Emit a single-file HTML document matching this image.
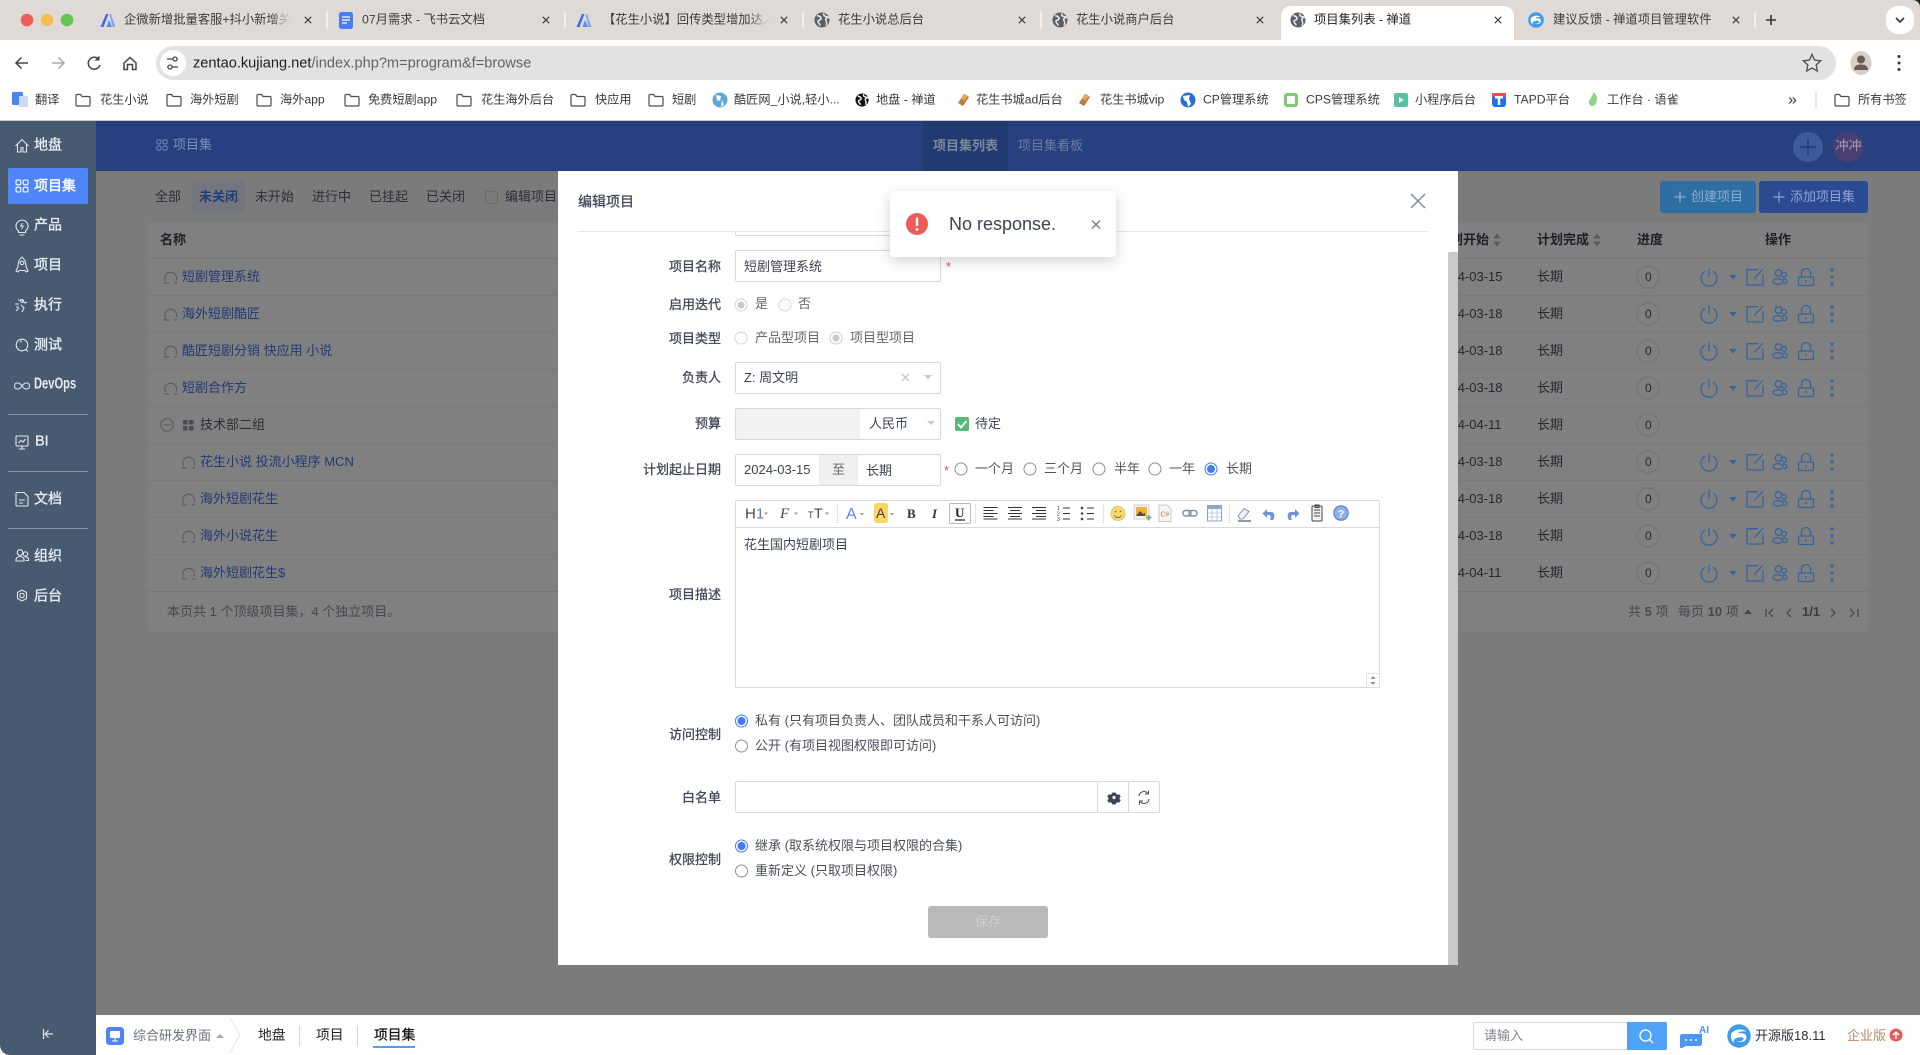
<!DOCTYPE html>
<html lang="zh"><head><meta charset="utf-8"><title>项目集列表 - 禅道</title>
<style>
*{box-sizing:border-box}
html,body{margin:0;padding:0;width:1920px;height:1055px;overflow:hidden;background:#fff}
body{position:relative;font-family:"Liberation Sans","Noto Sans CJK SC",sans-serif;font-size:13px;color:#333}
.b{position:absolute}
.t{position:absolute;white-space:nowrap;line-height:1.2;transform:translateY(-50%)}
.r{text-align:right}
.row{position:absolute;left:0;top:0;width:1920px;height:0}
.row .t{top:0}
.row svg{position:absolute;overflow:visible}
.tab{font-size:12.3px;color:#3b3b3b}
.bm{font-size:12.2px;top:100px;color:#3a3a3a}
.side{font-size:14px;color:#e6ebf0;left:34px;-webkit-text-stroke:.35px #e6ebf0}
.f{font-size:13px;top:197px;color:#2b2f38}
.a{font-size:13px;color:#1f3a74}
.d{font-size:13px;color:#25282f}
.th{font-size:13px;font-weight:700;color:#1d2026;top:240px}
.lb{font-size:13px;color:#3c4353;right:1199px;text-align:right;-webkit-text-stroke:.25px #3c4353}
.ft{font-size:13px;color:#3c4353}
.box{position:absolute;background:#fff;border:1px solid #d6d9df;border-radius:2px}
.svgfull{position:absolute;left:0;top:0;overflow:visible;pointer-events:none}
</style></head><body>

<svg width="0" height="0" style="position:absolute">
<defs>
<symbol id="x8" viewBox="0 0 10 10" overflow="visible"><path d="M1 1L9 9M9 1L1 9" stroke="#3c3c3c" stroke-width="1.4" fill="none"/></symbol>
<symbol id="folder" viewBox="0 0 16 14" overflow="visible"><path d="M1 2.5a1 1 0 0 1 1-1h3.5l1.500 2h7a1 1 0 0 1 1 1v7.500a1 1 0 0 1-1 1H2a1 1 0 0 1-1-1z" fill="none" stroke="#4b4b4b" stroke-width="1.2"/></symbol>
<symbol id="globe" viewBox="0 0 16 16" overflow="visible"><circle cx="8" cy="8" r="7.500" fill="#5b6066"/><path d="M3 3.500c2 .5 4 1 4 3s-3 1-3 3 2 1.500 2 4M10 1.500c-1 2 1 3 2 3l3 1c-2 0-4 1-3 3s1 3 0 5" fill="none" stroke="#e7e7e7" stroke-width="1.600"/></symbol>
<symbol id="globeb" viewBox="0 0 16 16" overflow="visible"><circle cx="8" cy="8" r="7.500" fill="#111"/><path d="M3 3.500c2 .5 4 1 4 3s-3 1-3 3 2 1.500 2 4M10 1.500c-1 2 1 3 2 3l3 1c-2 0-4 1-3 3s1 3 0 5" fill="none" stroke="#f5f5f5" stroke-width="1.600"/></symbol>
<symbol id="blueA" viewBox="0 0 16 16" overflow="visible"><path d="M0.500 15L6 2h2.500L3.500 15z" fill="#3d6fe0"/><path d="M6.500 15L9 8l3 7z" fill="#5c8cf0"/><path d="M9.500 2H11l4.500 13h-3z" fill="#7fa6f5"/></symbol>
<symbol id="zt" viewBox="0 0 16 16" overflow="visible"><circle cx="8" cy="8" r="7.800" fill="#3d9be9"/><path d="M3 6c3-3 7-3 10-1-3-.5-5 0-6 1.500 3-1 6 0 6 2.500s-4 4-6.500 2.500c2 .5 4 0 4.500-1.500S8 8.500 6 9.500 4 12 5.500 13C3 12 2 9 3 6z" fill="#fff"/></symbol>
<symbol id="prog" viewBox="0 0 16 16" overflow="visible"><path d="M3 12.200A6.300 6.300 0 1 1 13.800 11.500" fill="none" stroke="#565a66" stroke-width="1.100"/><path d="M.5 13.800H6.500M11.500 13.800H15" stroke="#565a66" stroke-width="1.100"/></symbol>
<symbol id="acts" viewBox="0 0 140 24" overflow="visible">
<g fill="none" stroke="#33659e" stroke-width="1.300">
<path d="M5 6.200A8 8 0 1 0 13 6.200"/><path d="M9 3.500V12"/>
<path d="M58 4.700H48a1 1 0 0 0-1 1V19a1 1 0 0 0 1 1H62a1 1 0 0 0 1-1V9.500"/><path d="M54.500 13.500L63 4"/>
<circle cx="78.500" cy="8" r="3.300"/><circle cx="84" cy="9.800" r="2.400"/><ellipse cx="78" cy="16.500" rx="5" ry="2.800"/><path d="M83 13.800c2.300 0 4 1 4 2.600s-1.500 2.300-3.500 2.300"/>
<rect x="98.500" y="12" width="15" height="8.500" rx="1.200"/><path d="M101.500 12V8a4.500 4.500 0 0 1 9 0v4"/><path d="M106 15v2.500"/>
</g>
<path d="M29 10h8l-4 4.500z" fill="#33659e"/>
<circle cx="132" cy="5" r="1.700" fill="#33659e"/><circle cx="132" cy="12" r="1.700" fill="#33659e"/><circle cx="132" cy="19" r="1.700" fill="#33659e"/>
</symbol>
<symbol id="pc" viewBox="0 0 24 24" overflow="visible"><circle cx="12" cy="12" r="11" fill="none" stroke="#767676" stroke-width="1.500"/><circle cx="12" cy="1" r=".7" fill="#4c8a5c"/></symbol>
<symbol id="radio" viewBox="0 0 14 14" overflow="visible"><circle cx="7" cy="7" r="6" fill="#fff" stroke="#8b8f99" stroke-width="1"/></symbol>
<symbol id="radiol" viewBox="0 0 14 14" overflow="visible"><circle cx="7" cy="7" r="6" fill="#fff" stroke="#d8d8d8" stroke-width="1"/></symbol>
<symbol id="radiod" viewBox="0 0 14 14" overflow="visible"><circle cx="7" cy="7" r="6" fill="#fff" stroke="#d0d0d0" stroke-width="1"/><circle cx="7" cy="7" r="3.500" fill="#c9c9c9"/></symbol>
<symbol id="radioc" viewBox="0 0 14 14" overflow="visible"><circle cx="7" cy="7" r="6" fill="#fff" stroke="#3f7cf6" stroke-width="1"/><circle cx="7" cy="7" r="4" fill="#3f7cf6"/></symbol>
<symbol id="grid" viewBox="0 0 14 14" overflow="visible"><g fill="none" stroke="currentColor" stroke-width="1.100"><rect x="1" y="1" width="4.800" height="4.800" rx="1.500"/><rect x="8.200" y="1" width="4.800" height="4.800" rx="1.500"/><rect x="1" y="8.200" width="4.800" height="4.800" rx="1.500"/><rect x="8.200" y="8.200" width="4.800" height="4.800" rx="1.500"/></g></symbol>
</defs>
</svg>

<!-- tab strip -->
<div class="b" style="left:0;top:0;width:1920px;height:40px;background:#e0dad7"></div>
<div class="b" style="left:1281px;top:6px;width:233px;height:34px;background:#fff;border-radius:10px 10px 0 0"></div>
<div class="b" style="left:1886px;top:6px;width:28px;height:28px;background:#fff;border-radius:12px"></div>
<div class="b" style="left:0;top:40px;width:1920px;height:80px;background:#fff"></div>
<div class="b" style="left:0;top:120px;width:1920px;height:1px;background:#c9c9c9"></div>

<span class="t tab" style="left:124px;top:20px;width:166px;overflow:hidden;-webkit-mask-image:linear-gradient(90deg,#000 88%,transparent)">企微新增批量客服+抖小新增关注</span>
<span class="t tab" style="left:362px;top:20px">07月需求 - 飞书云文档</span>
<span class="t tab" style="left:603px;top:20px;width:166px;overflow:hidden;-webkit-mask-image:linear-gradient(90deg,#000 88%,transparent)">【花生小说】回传类型增加达人</span>
<span class="t tab" style="left:838px;top:20px">花生小说总后台</span>
<span class="t tab" style="left:1076px;top:20px">花生小说商户后台</span>
<span class="t tab" style="left:1314px;top:20px;color:#222">项目集列表 - 禅道</span>
<span class="t tab" style="left:1553px;top:20px">建议反馈 - 禅道项目管理软件</span>

<!-- address bar -->
<div class="b" style="left:156px;top:46px;width:1680px;height:34px;background:#e2e2e2;border-radius:17px"></div>
<div class="b" style="left:160px;top:50px;width:26px;height:26px;background:#fff;border-radius:50%"></div>
<span class="t" style="left:193px;top:64px;font-size:14.6px;color:#1f1f1f">zentao.kujiang.net<span style="color:#5f6368">/index.php?m=program&amp;f=browse</span></span>

<!-- bookmarks -->
<span class="t bm" style="left:35px">翻译</span>
<span class="t bm" style="left:100px">花生小说</span>
<span class="t bm" style="left:190px">海外短剧</span>
<span class="t bm" style="left:280px">海外app</span>
<span class="t bm" style="left:368px">免费短剧app</span>
<span class="t bm" style="left:481px">花生海外后台</span>
<span class="t bm" style="left:595px">快应用</span>
<span class="t bm" style="left:672px">短剧</span>
<span class="t bm" style="left:734px">酷匠网_小说,轻小...</span>
<span class="t bm" style="left:876px">地盘 - 禅道</span>
<span class="t bm" style="left:976px">花生书城ad后台</span>
<span class="t bm" style="left:1100px">花生书城vip</span>
<span class="t bm" style="left:1203px">CP管理系统</span>
<span class="t bm" style="left:1306px">CPS管理系统</span>
<span class="t bm" style="left:1415px">小程序后台</span>
<span class="t bm" style="left:1514px">TAPD平台</span>
<span class="t bm" style="left:1607px">工作台 · 语雀</span>
<span class="t bm" style="left:1788px;font-size:16px">»</span>
<span class="t bm" style="left:1858px">所有书签</span>

<!-- chrome icons -->
<svg class="svgfull" width="1920" height="1055">
<circle cx="27" cy="20" r="6.300" fill="#ec5f57"/><circle cx="47" cy="20" r="6.300" fill="#f4bd4f"/><circle cx="67" cy="20" r="6.300" fill="#62c554"/>
<use href="#blueA" x="100" y="12" width="16" height="16"/>
<rect x="339" y="12" width="14" height="17" rx="2.500" fill="#4a7df2"/><path d="M342 17h8M342 20h8M342 23h5" stroke="#fff" stroke-width="1.200"/>
<use href="#blueA" x="576" y="12" width="16" height="16"/>
<use href="#globe" x="814" y="12" width="16" height="16"/>
<use href="#globe" x="1052" y="12" width="16" height="16"/>
<use href="#globe" x="1290" y="12" width="16" height="16"/>
<use href="#zt" x="1528" y="12" width="16" height="16"/>
<use href="#x8" x="304" y="16" width="8" height="8"/><use href="#x8" x="542" y="16" width="8" height="8"/><use href="#x8" x="780" y="16" width="8" height="8"/><use href="#x8" x="1018" y="16" width="8" height="8"/><use href="#x8" x="1256" y="16" width="8" height="8"/><use href="#x8" x="1494" y="16" width="8" height="8"/><use href="#x8" x="1732" y="16" width="8" height="8"/>
<g stroke="#fff" stroke-width="1.200"><path d="M327 12v16M565 12v16M803 12v16M1041 12v16M1755 12v16"/></g>
<path d="M1771 15v10M1766 20h10" stroke="#333" stroke-width="1.600"/>
<path d="M1896 18l4 4 4-4" fill="none" stroke="#333" stroke-width="1.600"/>
<path d="M1912 0h8v7c0-4-3-7-8-7zM1920 1047v8h-8c5 0 8-3 8-8z" fill="#222"/>
<!-- toolbar -->
<g fill="none" stroke="#444" stroke-width="1.500">
<path d="M28 63H16M21.500 57.500L16 63l5.500 5.500"/>
<path d="M52 63h12M58.500 57.500L64 63l-5.500 5.500" stroke="#a8a8a8"/>
<path d="M99 59.500A6 6 0 1 0 100 65"/>
<path d="M124 63l6-5.500 6 5.500v6.500h-3.500V64.500h-5v5H124z"/>
</g>
<path d="M99.500 55.500v5h-5z" fill="#444"/>
<g stroke="#444" stroke-width="1.200" fill="none"><path d="M167 59h6M177 59h1M167 67h1M172 67h6"/><circle cx="175" cy="59" r="2"/><circle cx="170" cy="67" r="2"/></g>
<path d="M1812 54.500l2.600 5.600 6.100.7-4.500 4.200 1.200 6-5.400-3-5.400 3 1.200-6-4.500-4.200 6.100-.7z" fill="none" stroke="#555" stroke-width="1.400"/>
<ellipse cx="1861" cy="63" rx="10.500" ry="12" fill="#d7cfca"/><circle cx="1861" cy="59.500" r="4" fill="#6b5a50"/><path d="M1854 70c0-4 3-5.500 7-5.500s7 1.500 7 5.500z" fill="#6b5a50"/>
<circle cx="1899" cy="56.500" r="1.500" fill="#333"/><circle cx="1899" cy="63" r="1.500" fill="#333"/><circle cx="1899" cy="69.500" r="1.500" fill="#333"/>
<!-- bookmark icons -->
<rect x="12" y="92" width="11" height="13" rx="1.500" fill="#4a85f2"/><rect x="19" y="96" width="9" height="11" rx="1" fill="#c9d9f7"/>
<use href="#folder" x="75" y="93" width="16" height="14"/><use href="#folder" x="166" y="93" width="16" height="14"/><use href="#folder" x="256" y="93" width="16" height="14"/><use href="#folder" x="344" y="93" width="16" height="14"/><use href="#folder" x="456" y="93" width="16" height="14"/><use href="#folder" x="570" y="93" width="16" height="14"/><use href="#folder" x="648" y="93" width="16" height="14"/><use href="#folder" x="1834" y="93" width="16" height="14"/>
<circle cx="720" cy="100" r="7.500" fill="#5aa9d8"/><path d="M716 95l5 1-1 5-3-1zM722 100l2 5-3 2z" fill="#fff"/>
<use href="#globeb" x="855" y="93" width="14" height="14"/>
<g fill="#b97a3e"><path d="M958 103l6-9 5 3-6 9z"/><path d="M1079 103l6-9 5 3-6 9z"/></g>
<g fill="#e2a45f"><path d="M961 98l4-4 3 2-4 5z"/><path d="M1082 98l4-4 3 2-4 5z"/></g>
<circle cx="1188" cy="100" r="7.500" fill="#2a6fd6"/><path d="M1183 96l7-1-1 4 2 5-3 3-1-5-3-2z" fill="#fff"/>
<rect x="1284" y="93" width="14" height="14" rx="3" fill="#7ccb73"/><rect x="1287" y="96" width="8" height="8" fill="#fff"/>
<rect x="1394" y="93" width="14" height="14" rx="2" fill="#57c2a0"/><path d="M1399 97l4.500 3-4.500 3z" fill="#fff"/>
<rect x="1492" y="93" width="14" height="14" rx="3" fill="#1f6ff2"/><path d="M1492 93h14v4h-14z" fill="#ea4f4f"/><path d="M1495 96h8v2.500h-2.800V105h-2.400V98.500H1495z" fill="#fff"/>
<path d="M1593 92c4 2 5 7 3 11s-6 4-7 0c0-5 4-6 4-11z" fill="#8fd18a"/>
<path d="M1816 92v16" stroke="#cfcfcf"/>
</svg>

<!-- app -->
<div class="b" style="left:0;top:121px;width:96px;height:934px;background:#475a70;border-bottom-left-radius:10px"></div>
<div class="b" style="left:96px;top:121px;width:1824px;height:50px;background:#264080"></div>
<div class="b" style="left:96px;top:171px;width:1824px;height:844px;background:#7b7b7b"></div>
<div class="b" style="left:96px;top:1015px;width:1824px;height:40px;background:#fff"></div>

<div class="b" style="left:8px;top:168px;width:80px;height:36px;background:#4e85f8;border-radius:2px"></div>
<span class="t side" style="top:145px">地盘</span>
<span class="t side" style="top:186px;color:#fff;-webkit-text-stroke:.4px #fff">项目集</span>
<span class="t side" style="top:225px">产品</span>
<span class="t side" style="top:265px">项目</span>
<span class="t side" style="top:305px">执行</span>
<span class="t side" style="top:345px">测试</span>
<span class="t side" style="top:385px;font-weight:700;font-size:15.500px;transform:translateY(-50%) scaleX(.72);transform-origin:left center;-webkit-text-stroke:0">DevOps</span>
<span class="t side" style="top:442px;left:35px;font-size:14.500px">BI</span>
<span class="t side" style="top:499px">文档</span>
<span class="t side" style="top:556px">组织</span>
<span class="t side" style="top:596px">后台</span>
<div class="b" style="left:8px;top:414px;width:80px;height:1px;background:#8795a5"></div>
<div class="b" style="left:8px;top:471px;width:80px;height:1px;background:#8795a5"></div>
<div class="b" style="left:8px;top:528px;width:80px;height:1px;background:#8795a5"></div>

<svg class="svgfull" width="1920" height="1055" style="color:#dfe5ea">
<g fill="none" stroke="#dfe5ea" stroke-width="1.100">
<path d="M15.500 146l6.500-6.500 6.500 6.500M17.500 144.500V152h3.500v-4.500h2V152h3.500v-7.500"/>
<path d="M18.500 231a6 6 0 1 1 7 0v1.500h-7zM19.500 235h5" /><path d="M22.500 223l-1.800 3h2.600l-1.800 3" stroke-width="1"/>
<path d="M22 257c3 2.500 4 6 4 9.500l2 4.500-2 1-1-1.500h-6l-1 1.500-2-1 2-4.500c0-3.500 1-7 4-9.500z"/><circle cx="22" cy="263" r="1.800"/>
<path d="M16 311l3-3M18 300h4l3 3 2-1M22 299.500a1.500 1.500 0 1 0 .1 0M15 304h4M16 307h3M21 305l3 3-2 4"/>
<circle cx="22" cy="345" r="5.800"/><path d="M26 349.500l2 2M20 342a3 3 0 0 1 2-1"/>
<path d="M22 386c-2-3-3.500-3-5-3s-2.500 1.300-2.500 3 1 3 2.500 3 3-0 5-3c2-3 3.500-3 5-3s2.500 1.300 2.500 3-1 3-2.500 3-3 0-5-3z"/>
<rect x="16" y="436" width="12" height="10" rx="1"/><path d="M18.500 443l2.500-2.500 2 1.500 2.500-3M19 449h6M22 446v3"/>
<path d="M17 492.500h7l4 4V505a1 1 0 0 1-1 1H17a1 1 0 0 1-1-1v-11.500a1 1 0 0 1 1-1zM19 500h6M19 503h4"/>
<circle cx="20" cy="552.500" r="2.800"/><circle cx="25.500" cy="554" r="2.200"/><path d="M16 561c-.5-3 1.500-4.500 4-4.500s4.500 1.500 4 4.500zM25 557c2.500 0 4 1 3.500 3.500H25.500"/>
<path d="M22 590l4.500 2.500v6L22 601l-4.500-2.500v-6z" stroke-linejoin="round"/><circle cx="22" cy="595.500" r="2.200"/>
</g>
<use href="#grid" x="15" y="179" width="14" height="14" style="color:#fff"/>
<use href="#grid" x="156" y="139" width="12" height="12" style="color:#7489b5"/>
<path d="M43.500 1029v10M53 1034h-7.500M48.500 1030.500L45 1034l3.500 3.500" fill="none" stroke="#dfe5ea" stroke-width="1.200"/>
<!-- topbar right -->
<circle cx="1808" cy="147" r="15" fill="#3d5a9a"/><path d="M1808 139v16M1800 147h16" stroke="#264080" stroke-width="1.800"/>
<circle cx="1848" cy="147" r="15" fill="#4b3f72"/>
</svg>
<div class="b" style="left:923px;top:121px;width:85px;height:50px;background:#213a71"></div>
<span class="t" style="left:173px;top:145px;color:#7e90b4;font-size:13px">项目集</span>
<span class="t" style="left:933px;top:146px;color:#7d8898;font-size:13px;font-weight:700">项目集列表</span>
<span class="t" style="left:1018px;top:146px;color:#6f7e9b;font-size:13px">项目集看板</span>
<span class="t" style="left:1835.500px;top:146px;color:#a49fb3;font-size:13px">冲冲</span>

<!-- filters -->
<div class="b" style="left:192px;top:181px;width:53px;height:32px;background:#74767d;border-radius:3px"></div>
<span class="t f" style="left:155px">全部</span>
<span class="t f" style="left:199px;color:#1f3d7c;font-weight:700">未关闭</span>
<span class="t f" style="left:255px">未开始</span>
<span class="t f" style="left:312px">进行中</span>
<span class="t f" style="left:369px">已挂起</span>
<span class="t f" style="left:426px">已关闭</span>
<div class="b" style="left:485px;top:191px;width:13px;height:13px;border:1px solid #6a6a6a;border-radius:2px"></div>
<span class="t f" style="left:505px">编辑项目集</span>

<div class="b" style="left:1660px;top:181px;width:96px;height:32px;background:#2f6ea3;border-radius:3px"></div>
<div class="b" style="left:1759px;top:181px;width:109px;height:32px;background:#2a4a94;border-radius:3px"></div>
<span class="t" style="left:1691px;top:197px;color:#8ab0cf;font-size:13px">创建项目</span>
<span class="t" style="left:1790px;top:197px;color:#8ea4cf;font-size:13px">添加项目集</span>
<svg class="svgfull" width="1920" height="1055"><path d="M1680 191.500v11M1674.500 197h11" stroke="#8ab0cf" stroke-width="1.200"/><path d="M1779 191.500v11M1773.500 197h11" stroke="#8ea4cf" stroke-width="1.200"/></svg>

<!-- table -->
<div class="b" style="left:148px;top:222px;width:1720px;height:410px;background:#808080;border-radius:3px"></div>
<div class="b" style="left:148px;top:258px;width:1720px;height:1px;background:#777"></div>
<div class="b" style="left:148px;top:295px;width:1720px;height:1px;background:#797979"></div>
<div class="b" style="left:148px;top:332px;width:1720px;height:1px;background:#797979"></div>
<div class="b" style="left:148px;top:369px;width:1720px;height:1px;background:#797979"></div>
<div class="b" style="left:148px;top:406px;width:1720px;height:1px;background:#797979"></div>
<div class="b" style="left:148px;top:443px;width:1720px;height:1px;background:#797979"></div>
<div class="b" style="left:148px;top:480px;width:1720px;height:1px;background:#797979"></div>
<div class="b" style="left:148px;top:517px;width:1720px;height:1px;background:#797979"></div>
<div class="b" style="left:148px;top:554px;width:1720px;height:1px;background:#797979"></div>
<div class="b" style="left:148px;top:591px;width:1720px;height:1px;background:#777"></div>

<span class="t th" style="left:160px">名称</span>
<span class="t th" style="left:1437px">计划开始</span>
<span class="t th" style="left:1537px">计划完成</span>
<span class="t th" style="left:1637px">进度</span>
<span class="t th" style="left:1765px">操作</span>
<svg class="svgfull" width="1920" height="1055"><g fill="#5b5b5b"><path d="M1493 238.500l4-5 4 5zM1493 241.500l4 5 4-5zM1593 238.500l4-5 4 5zM1593 241.500l4 5 4-5z"/></g></svg>

<div class="row" style="top:277px"><svg style="left:163px;top:-7px" width="15" height="15"><use href="#prog"/></svg><span class="t a" style="left:182px">短剧管理系统</span><span class="t d" style="left:1436px">2024-03-15</span><span class="t d" style="left:1537px">长期</span><svg style="left:1636px;top:-12px" width="24" height="24"><use href="#pc"/></svg><span class="t d" style="left:1645px;font-size:12px">0</span><svg style="left:1700px;top:-12px" width="140" height="24"><use href="#acts"/></svg></div>
<div class="row" style="top:314px"><svg style="left:163px;top:-7px" width="15" height="15"><use href="#prog"/></svg><span class="t a" style="left:182px">海外短剧酷匠</span><span class="t d" style="left:1436px">2024-03-18</span><span class="t d" style="left:1537px">长期</span><svg style="left:1636px;top:-12px" width="24" height="24"><use href="#pc"/></svg><span class="t d" style="left:1645px;font-size:12px">0</span><svg style="left:1700px;top:-12px" width="140" height="24"><use href="#acts"/></svg></div>
<div class="row" style="top:351px"><svg style="left:163px;top:-7px" width="15" height="15"><use href="#prog"/></svg><span class="t a" style="left:182px">酷匠短剧分销 快应用 小说</span><span class="t d" style="left:1436px">2024-03-18</span><span class="t d" style="left:1537px">长期</span><svg style="left:1636px;top:-12px" width="24" height="24"><use href="#pc"/></svg><span class="t d" style="left:1645px;font-size:12px">0</span><svg style="left:1700px;top:-12px" width="140" height="24"><use href="#acts"/></svg></div>
<div class="row" style="top:388px"><svg style="left:163px;top:-7px" width="15" height="15"><use href="#prog"/></svg><span class="t a" style="left:182px">短剧合作方</span><span class="t d" style="left:1436px">2024-03-18</span><span class="t d" style="left:1537px">长期</span><svg style="left:1636px;top:-12px" width="24" height="24"><use href="#pc"/></svg><span class="t d" style="left:1645px;font-size:12px">0</span><svg style="left:1700px;top:-12px" width="140" height="24"><use href="#acts"/></svg></div>
<div class="row" style="top:425px"><svg style="left:160px;top:-7px" width="14" height="14"><circle cx="7" cy="7" r="6.200" fill="none" stroke="#55585f" stroke-width="1"/><path d="M3.500 7h7" stroke="#55585f"/></svg><svg style="left:183px;top:-5.500px" width="11" height="11"><g fill="#4a4d55"><rect width="4.500" height="4.500"/><rect x="6" width="4.500" height="4.500"/><rect y="6" width="4.500" height="4.500"/><rect x="6" y="6" width="4.500" height="4.500"/></g></svg><span class="t d" style="left:200px;color:#2b2e36">技术部二组</span><span class="t d" style="left:1436px">2024-04-11</span><span class="t d" style="left:1537px">长期</span><svg style="left:1636px;top:-12px" width="24" height="24"><use href="#pc"/></svg><span class="t d" style="left:1645px;font-size:12px">0</span></div>
<div class="row" style="top:462px"><svg style="left:181px;top:-7px" width="15" height="15"><use href="#prog"/></svg><span class="t a" style="left:200px">花生小说 投流小程序 MCN</span><span class="t d" style="left:1436px">2024-03-18</span><span class="t d" style="left:1537px">长期</span><svg style="left:1636px;top:-12px" width="24" height="24"><use href="#pc"/></svg><span class="t d" style="left:1645px;font-size:12px">0</span><svg style="left:1700px;top:-12px" width="140" height="24"><use href="#acts"/></svg></div>
<div class="row" style="top:499px"><svg style="left:181px;top:-7px" width="15" height="15"><use href="#prog"/></svg><span class="t a" style="left:200px">海外短剧花生</span><span class="t d" style="left:1436px">2024-03-18</span><span class="t d" style="left:1537px">长期</span><svg style="left:1636px;top:-12px" width="24" height="24"><use href="#pc"/></svg><span class="t d" style="left:1645px;font-size:12px">0</span><svg style="left:1700px;top:-12px" width="140" height="24"><use href="#acts"/></svg></div>
<div class="row" style="top:536px"><svg style="left:181px;top:-7px" width="15" height="15"><use href="#prog"/></svg><span class="t a" style="left:200px">海外小说花生</span><span class="t d" style="left:1436px">2024-03-18</span><span class="t d" style="left:1537px">长期</span><svg style="left:1636px;top:-12px" width="24" height="24"><use href="#pc"/></svg><span class="t d" style="left:1645px;font-size:12px">0</span><svg style="left:1700px;top:-12px" width="140" height="24"><use href="#acts"/></svg></div>
<div class="row" style="top:573px"><svg style="left:181px;top:-7px" width="15" height="15"><use href="#prog"/></svg><span class="t a" style="left:200px">海外短剧花生$</span><span class="t d" style="left:1436px">2024-04-11</span><span class="t d" style="left:1537px">长期</span><svg style="left:1636px;top:-12px" width="24" height="24"><use href="#pc"/></svg><span class="t d" style="left:1645px;font-size:12px">0</span><svg style="left:1700px;top:-12px" width="140" height="24"><use href="#acts"/></svg></div>

<span class="t" style="left:167px;top:612px;color:#45484e;font-size:13px">本页共 1 个顶级项目集，4 个独立项目。</span>
<span class="t" style="left:1628px;top:612px;color:#45484e;font-size:13px">共 <b>5</b> 项</span>
<span class="t" style="left:1678px;top:612px;color:#45484e;font-size:13px">每页 <b>10</b> 项</span>
<span class="t" style="left:1802px;top:612px;color:#3a3d44;font-size:13px;font-weight:700">1/1</span>
<svg class="svgfull" width="1920" height="1055"><path d="M1744 614l4-4.500 4 4.500z" fill="#45484e"/><g fill="none" stroke="#45484e" stroke-width="1.300"><path d="M1766 609v8M1773 609l-4 4 4 4M1791 609l-4 4 4 4M1831 609l4 4-4 4M1850 609l4 4-4 4M1858 609v8"/></g></svg>

<!-- footer -->
<span class="t" style="left:133px;top:1036px;font-size:13px;color:#6a7080">综合研发界面</span>
<span class="t" style="left:258px;top:1036px;font-size:13.800px;color:#222">地盘</span>
<span class="t" style="left:316px;top:1036px;font-size:13.800px;color:#222">项目</span>
<span class="t" style="left:374px;top:1036px;font-size:13.800px;color:#111;-webkit-text-stroke:.25px #111">项目集</span>
<div class="b" style="left:373px;top:1046px;width:42px;height:2px;background:#4ca1f4"></div>
<div class="box" style="left:1473px;top:1022px;width:155px;height:28px;border-color:#d8d8d8"></div>
<div class="b" style="left:1627px;top:1022px;width:40px;height:28px;background:#4fa3f8;border-radius:0 2px 2px 0"></div>
<span class="t" style="left:1484px;top:1036px;font-size:13px;color:#80848c">请输入</span>
<span class="t" style="left:1755px;top:1036px;font-size:13px;color:#2c3140">开源版18.11</span>
<span class="t" style="left:1847px;top:1036px;font-size:13px;color:#b58a66">企业版</span>
<svg class="svgfull" width="1920" height="1055">
<rect x="106" y="1027" width="18" height="18" rx="3.500" fill="#4d85f8"/><rect x="110" y="1031" width="10" height="7" rx="1" fill="#fff"/><path d="M112 1041h6M115 1038v3" stroke="#fff"/>
<path d="M216 1038l4-4 4 4z" fill="#a6abb5"/>
<path d="M230 1018l9.500 17-9.500 18" fill="none" stroke="#e6e6e6"/>
<path d="M299.500 1026v20M357.500 1026v20" stroke="#d8d8d8"/>
<circle cx="1645.500" cy="1035.500" r="5.500" fill="none" stroke="#fff" stroke-width="1.300"/><path d="M1649.500 1039.500l3.500 3.500" stroke="#fff" stroke-width="1.300"/>
<path d="M1680 1036c0-1 1-2 2-2h16c3 0 4-1 4-1v10c0 2-1 3-3 3h-13l-4 2c-1 .5-2 0-2-1z" fill="#4d95f5"/><g fill="#fff"><circle cx="1686" cy="1040" r="1"/><circle cx="1691" cy="1040" r="1"/><circle cx="1696" cy="1040" r="1"/></g>
<use href="#zt" x="1727" y="1024" width="24" height="24"/>
<circle cx="1896" cy="1035" r="6.500" fill="#e85a5a"/><path d="M1896 1039v-7M1893 1035l3-3 3 3" fill="none" stroke="#fff" stroke-width="1.500"/>
</svg>
<span class="t" style="left:1699px;top:1031px;font-size:10px;font-weight:700;color:#4a90f0">AI</span>

<!-- modal -->
<div class="b" style="left:558px;top:171px;width:900px;height:794px;background:#fff"></div>
<div class="b" style="left:1448px;top:252px;width:10px;height:713px;background:#c9c9c9;border-radius:2px 2px 0 0"></div>
<div class="b" style="left:578px;top:231px;width:850px;height:1px;background:#e8e8e8"></div>
<span class="t" style="left:578px;top:202px;font-size:14px;color:#3c4353;-webkit-text-stroke:.25px #3c4353">编辑项目</span>

<div class="box" style="left:735px;top:232px;width:206px;height:4px;border-top:0;border-radius:0 0 2px 2px"></div>

<span class="t lb" style="top:267px">项目名称</span>
<div class="box" style="left:735px;top:250px;width:206px;height:32px"></div>
<span class="t ft" style="left:744px;top:267px">短剧管理系统</span>
<span class="t" style="left:946px;top:267px;color:#e85555;font-size:13px">*</span>

<span class="t lb" style="top:305px">启用迭代</span>
<span class="t ft" style="left:755px;top:304px;color:#666">是</span>
<span class="t ft" style="left:798px;top:304px;color:#666">否</span>
<span class="t lb" style="top:339px">项目类型</span>
<span class="t ft" style="left:755px;top:338px;color:#666">产品型项目</span>
<span class="t ft" style="left:850px;top:338px;color:#666">项目型项目</span>

<span class="t lb" style="top:378px">负责人</span>
<div class="box" style="left:735px;top:362px;width:206px;height:32px"></div>
<span class="t ft" style="left:744px;top:378px">Z: 周文明</span>

<span class="t lb" style="top:424px">预算</span>
<div class="box" style="left:735px;top:408px;width:206px;height:32px"></div>
<div class="b" style="left:736px;top:409px;width:124px;height:30px;background:#f2f2f2"></div>
<span class="t ft" style="left:869px;top:424px">人民币</span>
<div class="b" style="left:955px;top:417px;width:14px;height:14px;background:#58b878;border-radius:2px"></div>
<span class="t ft" style="left:975px;top:424px">待定</span>

<span class="t lb" style="top:470px">计划起止日期</span>
<div class="box" style="left:735px;top:454px;width:206px;height:32px"></div>
<div class="b" style="left:819px;top:455px;width:39px;height:30px;background:#f0f0f0"></div>
<span class="t ft" style="left:744px;top:470px">2024-03-15</span>
<span class="t ft" style="left:832px;top:470px;color:#666">至</span>
<span class="t ft" style="left:866px;top:471px">长期</span>
<span class="t" style="left:944px;top:471px;color:#e85555;font-size:13px">*</span>
<span class="t ft" style="left:975px;top:469px;color:#555">一个月</span>
<span class="t ft" style="left:1044px;top:469px;color:#555">三个月</span>
<span class="t ft" style="left:1114px;top:469px;color:#555">半年</span>
<span class="t ft" style="left:1169px;top:469px;color:#555">一年</span>
<span class="t ft" style="left:1226px;top:469px;color:#555">长期</span>

<span class="t lb" style="top:595px">项目描述</span>
<div class="box" style="left:735px;top:500px;width:645px;height:188px"></div>
<div class="b" style="left:736px;top:527px;width:643px;height:1px;background:#d9d9d9"></div>
<div class="b" style="left:1366px;top:673px;width:14px;height:15px;border:1px solid #e0e0e0;background:#fff"></div>
<span class="t ft" style="left:744px;top:545px">花生国内短剧项目</span>

<svg class="svgfull" width="1920" height="1055" style="font-family:'Liberation Sans','Noto Sans CJK SC',sans-serif">
<use href="#radiod" x="734" y="298" width="14" height="14"/><use href="#radiol" x="778" y="298" width="14" height="14"/>
<use href="#radiol" x="734" y="331" width="14" height="14"/><use href="#radiod" x="829" y="331" width="14" height="14"/>
<use href="#radio" x="954" y="462" width="14" height="14"/><use href="#radio" x="1023" y="462" width="14" height="14"/><use href="#radio" x="1092" y="462" width="14" height="14"/><use href="#radio" x="1148" y="462" width="14" height="14"/><use href="#radioc" x="1204" y="462" width="14" height="14"/>
<path d="M902 374l7 7M909 374l-7 7" stroke="#c8c8c8" stroke-width="1.500"/>
<path d="M924 375h8l-4 4z" fill="#c4c8d0"/><path d="M927 421h8l-4 4z" fill="#c4c8d0"/>
<path d="M958 424l3 3.500 5.500-6.500" fill="none" stroke="#fff" stroke-width="1.800"/>
<!-- editor toolbar -->
<path d="M837.500 504v19M975.500 504v19M1103.500 504v19M1229.500 504v19" stroke="#d0d0d0" stroke-dasharray="1 1"/>
<rect x="949.500" y="503.500" width="21" height="20" rx="1.500" fill="#fff" stroke="#bbb"/>
<text x="745" y="518.500" font-size="15" fill="#444">H<tspan fill="#4a7de0">1</tspan></text>
<path d="M764 512.500h4l-2 2.500zM794 512.500h4l-2 2.500zM825 512.500h4l-2 2.500zM860 513h4l-2 2.500zM890 513h4l-2 2.500z" fill="#999"/>
<text x="780" y="518" font-size="15" font-style="italic" font-family="Liberation Serif" fill="#444">F</text>
<text x="808" y="518" font-size="9" fill="#444">T</text><text x="814" y="518" font-size="14" fill="#444">T</text>
<text x="846" y="519" font-size="16" fill="#5a88e0">A</text>
<rect x="874" y="503" width="14" height="20" rx="2.500" fill="#fad669"/>
<text x="876" y="518" font-size="14" fill="#444">A</text>
<text x="907" y="518" font-size="13" font-weight="700" font-family="Liberation Serif" fill="#333">B</text>
<text x="932" y="518" font-size="13" font-weight="700" font-style="italic" font-family="Liberation Serif" fill="#333">I</text>
<text x="955" y="517" font-size="13" font-weight="700" font-family="Liberation Serif" fill="#222">U</text>
<path d="M955 520h10" stroke="#222" stroke-width="1.200"/>
<g stroke="#333" stroke-width="1.100">
<path d="M983.500 507.500h14M983.500 510.500h10M983.500 513.500h14M983.500 516.500h10M983.500 519h14"/>
<path d="M1008 507.500h14M1010 510.500h10M1008 513.500h14M1010 516.500h10M1008 519h14"/>
<path d="M1032 507.500h14M1036 510.500h10M1032 513.500h14M1036 516.500h10M1032 519h14"/>
<path d="M1063 508h7M1063 513.500h7M1063 519h7M1087 508h7M1087 513.500h7M1087 519h7"/>
</g>
<g font-size="5" fill="#333"><text x="1057" y="510">1</text><text x="1057" y="515.500">2</text><text x="1057" y="521">3</text></g>
<g fill="#444"><circle cx="1082" cy="508" r="1.300"/><circle cx="1082" cy="513.500" r="1.300"/><circle cx="1082" cy="519" r="1.300"/></g>
<circle cx="1118" cy="513.500" r="7" fill="#f7d96d" stroke="#d9b64c" stroke-width=".7"/><circle cx="1115.500" cy="511.500" r=".8" fill="#665"/><circle cx="1120.500" cy="511.500" r=".8" fill="#665"/><path d="M1114.500 515.500a4 4 0 0 0 7 0" fill="none" stroke="#665" stroke-width=".8"/>
<rect x="1134" y="505" width="15" height="14" fill="#f6f6f6" stroke="#bbb" stroke-width=".7"/><rect x="1136" y="507" width="11" height="9" fill="#f3b13c"/><path d="M1136 516l4-5 3 3 2-1v3z" fill="#5b4a3a"/>
<path d="M1146 517.500h5.500M1148.700 515v5.500" stroke="#5fb65f" stroke-width="1.800"/>
<path d="M1159 505h8l4 4v12.500h-12z" fill="#f6f6f6" stroke="#bbb" stroke-width=".8"/><text x="1160.500" y="516.500" font-size="7" fill="#a8875c">C#</text>
<g fill="none" stroke="#7d8da3" stroke-width="1.400"><rect x="1183" y="510.500" width="8" height="5.500" rx="2.500"/><rect x="1189" y="510.500" width="8" height="5.500" rx="2.500"/></g>
<rect x="1207.500" y="505.500" width="14" height="15.500" fill="#fff" stroke="#8ea0bd"/><rect x="1207.500" y="505.500" width="14" height="3.500" fill="#8ea7d4"/><path d="M1212 509v12M1217 509v12M1208 513h13M1208 517h13" stroke="#b8c4d8" stroke-width=".8"/>
<path d="M1238 516l6-7.500 5 3-6 7.500h-3z" fill="#eef2f8" stroke="#6a7c96" stroke-width=".8"/><path d="M1238 521h13" stroke="#333"/>
<path d="M1273 520c2-3 2-8-2-8h-4v-3l-4.500 4.500 4.500 4.500v-3h2.500c1.500 0 1.500 3 .5 5z" fill="#6f92d8"/>
<path d="M1289 520c-2-3-2-8 2-8h4v-3l4.500 4.500-4.500 4.500v-3h-2.500c-1.500 0-1.500 3-.5 5z" fill="#6f92d8"/>
<rect x="1312" y="506" width="10" height="15" rx="1" fill="#f3f3f3" stroke="#444"/><path d="M1315 505h4v2.500h-4zM1314 510h6M1314 513h6M1314 516h6" stroke="#444" fill="none"/>
<circle cx="1341" cy="513" r="7.200" fill="#8cb0ec" stroke="#4d79cf"/><text x="1337.500" y="517.500" font-size="11" font-weight="700" fill="#fff">?</text>
<path d="M1370.500 679l2.500-3 2.500 3zM1370.500 682l2.500 3 2.500-3z" fill="#8a8f9a"/>
<!-- access radios -->
<use href="#radioc" x="734.500" y="714" width="14" height="14"/><use href="#radio" x="734.500" y="739" width="14" height="14"/>
<use href="#radioc" x="734.500" y="839" width="14" height="14"/><use href="#radio" x="734.500" y="864" width="14" height="14"/>
<path d="M1112 793h3l.7 1.500 1.500.7 1.500-.5 1.500 2.500-1.100 1 0 1.600 1.100 1-1.500 2.500-1.500-.5-1.500.7-.7 1.500h-3l-.7-1.500-1.500-.7-1.500.5-1.500-2.500 1.100-1 0-1.600-1.100-1 1.500-2.500 1.500.5 1.500-.7z" transform="translate(.5 -.5)" fill="#3c4353"/><circle cx="1114" cy="797.500" r="1.600" fill="#fff"/>
<g fill="none" stroke="#3c4353" stroke-width="1"><path d="M1139 796a5 5 0 0 1 8.500-3M1149 799a5 5 0 0 1-8.500 3"/><path d="M1148.500 790.500v3.500h-3.500M1139.500 804.500V801h3.500"/></g>
</svg>

<span class="t lb" style="top:735px">访问控制</span>
<span class="t ft" style="left:755px;top:721px;color:#4a4f5c">私有 (只有项目负责人、团队成员和干系人可访问)</span>
<span class="t ft" style="left:755px;top:746px;color:#4a4f5c">公开 (有项目视图权限即可访问)</span>
<span class="t lb" style="top:798px">白名单</span>
<div class="box" style="left:735px;top:781px;width:363px;height:32px"></div>
<div class="box" style="left:1097px;top:781px;width:32px;height:32px;background:transparent"></div>
<div class="box" style="left:1128px;top:781px;width:32px;height:32px;background:transparent"></div>
<span class="t lb" style="top:860px">权限控制</span>
<span class="t ft" style="left:755px;top:846px;color:#4a4f5c">继承 (取系统权限与项目权限的合集)</span>
<span class="t ft" style="left:755px;top:871px;color:#4a4f5c">重新定义 (只取项目权限)</span>
<div class="b" style="left:928px;top:906px;width:120px;height:32px;background:#b9b9b9;border-radius:3px"></div>
<span class="t" style="left:975px;top:922px;color:#cfcfcf;font-size:13px">保存</span>

<!-- modal close -->
<svg class="svgfull" width="1920" height="1055"><path d="M1411 194l14 14M1425 194l-14 14" stroke="#838a9d" stroke-width="1.500"/></svg>

<!-- toast -->
<div class="b" style="left:890px;top:191px;width:226px;height:66px;background:#fff;border-radius:4px;box-shadow:0 4px 14px rgba(0,0,0,.18)"></div>
<span class="t" style="left:949px;top:225px;font-size:18px;color:#3c4353">No response.</span>
<svg class="svgfull" width="1920" height="1055"><circle cx="917" cy="224" r="11" fill="#ef5b5b"/><path d="M917 217.500v8.500" stroke="#fff" stroke-width="2.400"/><circle cx="917" cy="229.500" r="1.400" fill="#fff"/><path d="M1092 220.500l8 8M1100 220.500l-8 8" stroke="#7d8597" stroke-width="1.500"/></svg>

</body></html>
